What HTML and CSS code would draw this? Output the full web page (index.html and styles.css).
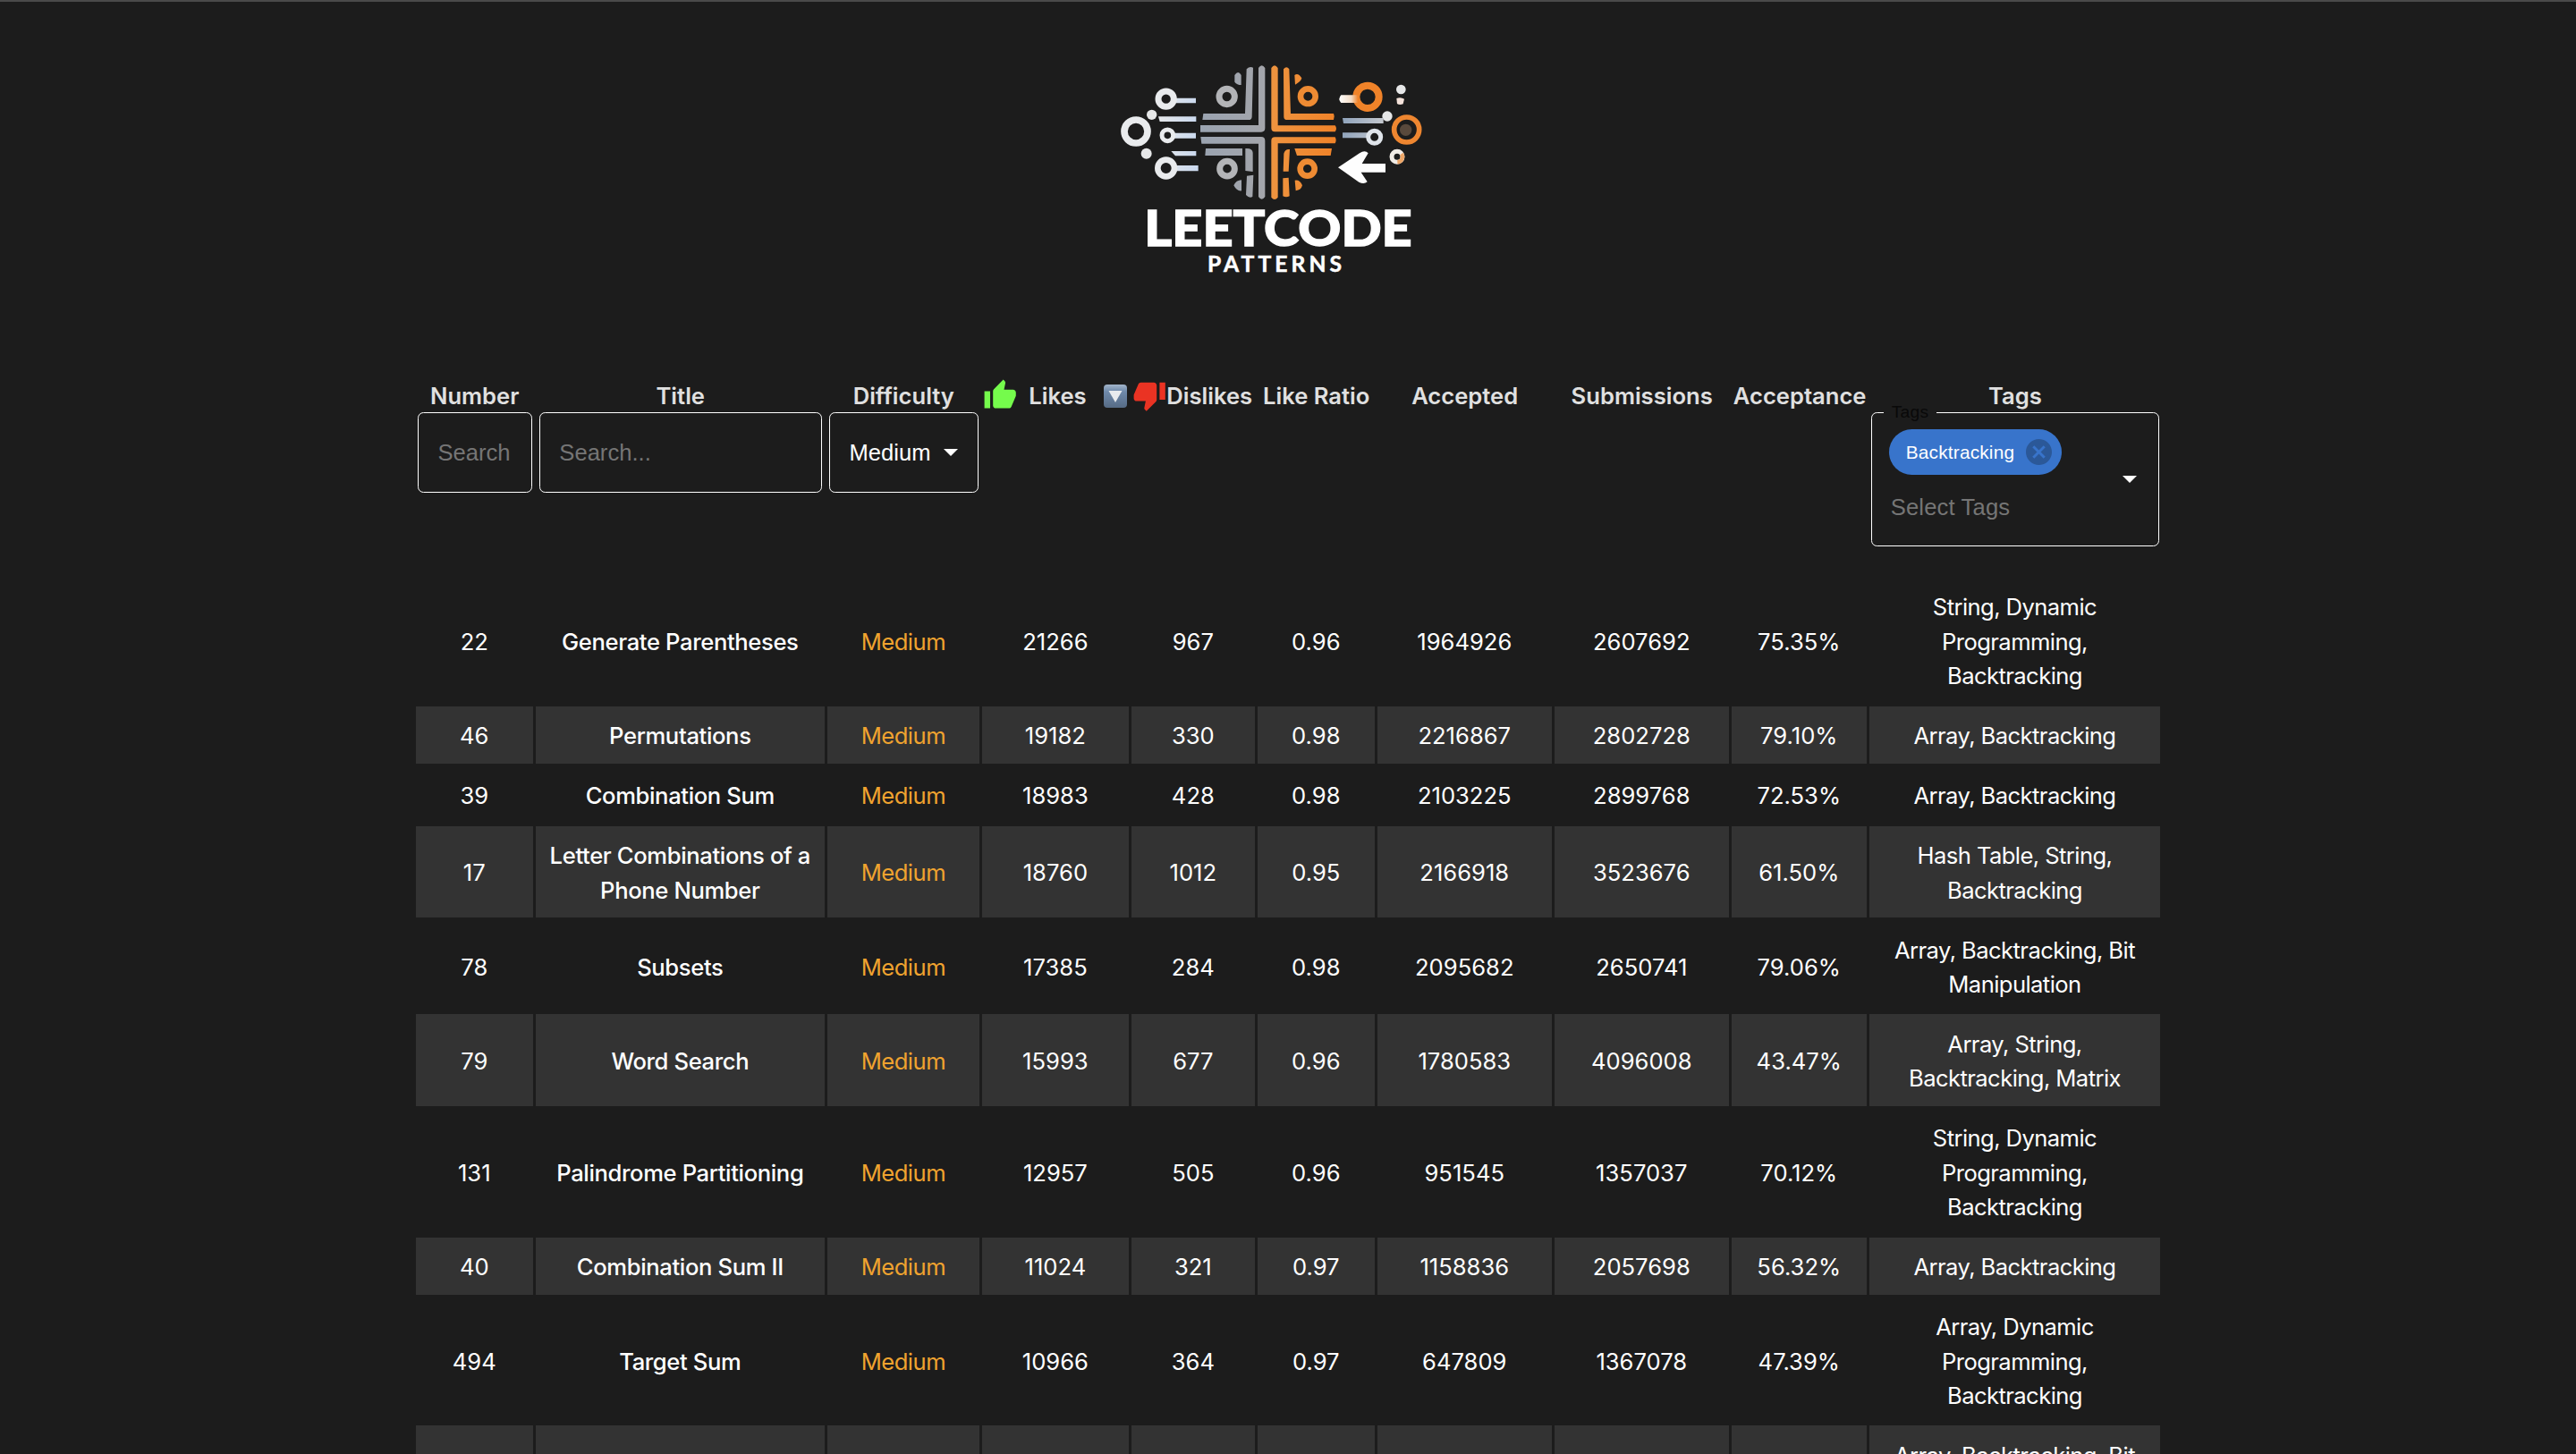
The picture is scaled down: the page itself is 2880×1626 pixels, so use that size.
FILE: index.html
```html
<!DOCTYPE html>
<html lang="en">
<head>
<meta charset="utf-8">
<title>Leetcode Patterns</title>
<link rel="stylesheet" href="styles.css">
</head>
<body>
<main class="page">
<header class="brand">
<svg class="logo" viewBox="0 0 1080 780" role="img" aria-label="Leetcode Patterns">
<defs>
<linearGradient id="steel" gradientUnits="userSpaceOnUse" x1="310" y1="0" x2="530" y2="0"><stop offset="0" stop-color="#9aa3b0"/><stop offset="1" stop-color="#a4a5aa"/></linearGradient>
<linearGradient id="amber" gradientUnits="userSpaceOnUse" x1="540" y1="0" x2="765" y2="0"><stop offset="0" stop-color="#ee9440"/><stop offset="1" stop-color="#f08228"/></linearGradient>
<linearGradient id="pale" gradientUnits="userSpaceOnUse" x1="160" y1="0" x2="300" y2="0"><stop offset="0" stop-color="#e6e8ea"/><stop offset="1" stop-color="#c9d8ee"/></linearGradient>
<linearGradient id="fade" gradientUnits="userSpaceOnUse" x1="780" y1="0" x2="925" y2="0"><stop offset="0" stop-color="#8fa3bb"/><stop offset="1" stop-color="#c5c8ce"/></linearGradient>
<linearGradient id="stub" gradientUnits="userSpaceOnUse" x1="770" y1="0" x2="835" y2="0"><stop offset="0" stop-color="#fff"/><stop offset=".65" stop-color="#f3ddc8"/><stop offset="1" stop-color="#f08228"/></linearGradient>
</defs>
<g fill="url(#steel)">
<path d="M501 48q11-16 22 0V250q0 13-13 13H306V240H501z"/>
<path d="M461 52q10-10 22-5L479 212q-1 10-11 10H313L316 201H456z"/>
<path d="M307 279H510q13 0 13 13V480q-11 16-22 0V302H310z"/>
<path d="M324 318H447V342H322zM457 318q24-2 25 14V396L457 393zM462 410L484 407 481 480q-11 6-22-6z"/>
<path d="M421 72q12-18 22 0V105q-14 0-22-10zM444 424V460q-16 2-26-18 8-18 26-18z"/>
</g>
<g fill="none" stroke="#b3b4b7" stroke-width="21"><circle cx="395" cy="144" r="26"/><circle cx="396" cy="386" r="25"/></g>
<g fill="url(#amber)">
<path d="M544 48q11-16 22 0V241H758q8 10 0 21H556q-12 0-12-12z"/>
<path d="M585 52q10-12 19 0L609 201H753q5 10 0 21H598q-12 0-12-10z"/>
<path d="M556 280H758q6 10 0 21H566V482q-11 14-22 0V292q0-12 12-12z"/>
<path d="M622 318H747L743 342H630zM606 321L602 395H584L586 335q4-16 20-14zM583 418L602 416 605 478q-11 6-22 0z"/>
<path d="M622 72q12-10 24 10-2 12-22 22zM623 425q17-3 25 17-4 16-22 18z"/>
</g>
<g fill="none" stroke="#ee8b33" stroke-width="20"><circle cx="667" cy="143" r="25"/><circle cx="665" cy="386" r="24"/></g>
<g fill="url(#pale)"><path d="M220 149H291V166H220zM165 211H292V228H170zM215 266H291V284H215zM208 327H292V343H222zM220 375H299V394H220z"/></g>
<g fill="none" stroke="#e9ebed">
<circle cx="191" cy="152" r="26" stroke-width="21"/><circle cx="90" cy="261" r="39" stroke-width="23"/>
<circle cx="196" cy="274" r="19" stroke-width="15"/><circle cx="191" cy="384" r="28" stroke-width="20"/>
</g>
<g fill="#e6e7e8"><circle cx="143" cy="205" r="17"/><circle cx="125" cy="335" r="18"/><circle cx="933" cy="210" r="17"/><circle cx="979" cy="120" r="16"/></g>
<path fill="#f4e2da" d="M964 150q14-6 26 2l-4 17q-12 4-20-1z"/>
<path fill="url(#fade)" d="M783 216H920V234H786zM783 265H870V283H783z"/>
<circle cx="867" cy="145" r="38" fill="none" stroke="#f08329" stroke-width="24"/>
<path fill="url(#stub)" d="M778 139H835V165H778q-12-13 0-26z"/>
<circle cx="890" cy="280" r="21" fill="none" stroke="#dfe4ea" stroke-width="15"/>
<circle cx="998" cy="255" r="42" fill="none" stroke="#ee8630" stroke-width="17"/><circle cx="995" cy="256" r="20" fill="#59493c"/>
<circle cx="966" cy="346" r="18" fill="none" stroke="#f1ece6" stroke-width="15"/><path d="M981 336A18 18 0 0 1 967 364" fill="none" stroke="#eda566" stroke-width="13"/>
<path fill="#fdfdfd" d="M768 382L840 334Q858 322 869 334L848 369H927V398H845L866 430Q855 440 838 431Z"/>
<g fill="#fff" class="wordmark"><text class="main" x="118" y="645" textLength="898" lengthAdjust="spacingAndGlyphs" font-size="164">LEETCODE</text>
<text class="sub" x="330" y="731" textLength="450" font-size="74">PATTERNS</text></g>
</svg>
</header>
<table class="problems">
<colgroup><col class="c-num"><col class="c-title"><col class="c-diff"><col class="c-likes"><col class="c-dis"><col class="c-ratio"><col class="c-big"><col class="c-big"><col class="c-acc"><col class="c-tags"></colgroup>
<thead><tr>
<th><div class="label">Number</div><div class="field num-field">Search</div></th>
<th><div class="label">Title</div><div class="field title-field">Search...</div></th>
<th><div class="label">Difficulty</div><div class="field select">Medium<svg class="caret" viewBox="0 0 10 5"><path d="M0 0l5 5 5-5z"/></svg></div></th>
<th><div class="label likes"><svg class="thumb up" viewBox="0 0 24 24"><path d="M1 21h4V9H1v12zm22-11c0-1.100-.9-2-2-2h-6.310l.95-4.570.03-.32c0-.41-.17-.79-.44-1.060L14.170 1 7.590 7.590C7.220 7.950 7 8.450 7 9v10c0 1.100.9 2 2 2h9c.83 0 1.540-.5 1.840-1.220l3.020-7.050c.09-.23.14-.47.14-.73v-2z"/></svg><span class="likes-text">Likes</span><svg class="sort" viewBox="0 0 26 26"><defs><linearGradient id="key" x2="0" y2="1"><stop offset="0" stop-color="#a3b5ca"/><stop offset=".3" stop-color="#6f8aab"/><stop offset="1" stop-color="#566b85"/></linearGradient></defs><rect width="26" height="26" rx="4" fill="url(#key)"/><path d="M5.500 7h15L13 20z" fill="#e8ebee"/></svg></div></th>
<th><div class="label dislikes"><svg class="thumb down" viewBox="0 0 24 24"><path d="M15 3H6c-.83 0-1.540.5-1.840 1.220l-3.020 7.050c-.09.23-.14.47-.14.73v2c0 1.100.9 2 2 2h6.310l-.95 4.570-.03.32c0 .41.17.79.44 1.060L9.830 23l6.590-6.590c.36-.36.58-.86.58-1.410V5c0-1.100-.9-2-2-2zm4 0v12h4V3h-4z"/></svg><span>Dislikes</span></div></th>
<th><div class="label">Like Ratio</div></th>
<th><div class="label">Accepted</div></th>
<th><div class="label">Submissions</div></th>
<th><div class="label">Acceptance</div></th>
<th><div class="label">Tags</div>
<div class="tag-field"><span class="legend">Tags</span><span class="chip">Backtracking<svg class="remove" viewBox="2 2 20 20"><path d="M12 2C6.470 2 2 6.470 2 12s4.470 10 10 10 10-4.470 10-10S17.530 2 12 2zm5 13.590L15.590 17 12 13.410 8.410 17 7 15.590 10.590 12 7 8.410 8.410 7 12 10.590 15.590 7 17 8.410 13.410 12 17 15.590z"/></svg></span><span class="hint">Select Tags</span><svg class="caret" viewBox="0 0 10 5"><path d="M0 0l5 5 5-5z"/></svg></div></th>
</tr></thead>
<tbody>
<tr><td>22</td><td>Generate Parentheses</td><td>Medium</td><td>21266</td><td>967</td><td>0.96</td><td>1964926</td><td>2607692</td><td>75.35%</td><td>String, Dynamic<br>Programming,<br>Backtracking</td></tr>
<tr><td>46</td><td>Permutations</td><td>Medium</td><td>19182</td><td>330</td><td>0.98</td><td>2216867</td><td>2802728</td><td>79.10%</td><td>Array, Backtracking</td></tr>
<tr><td>39</td><td>Combination Sum</td><td>Medium</td><td>18983</td><td>428</td><td>0.98</td><td>2103225</td><td>2899768</td><td>72.53%</td><td>Array, Backtracking</td></tr>
<tr><td>17</td><td>Letter Combinations of a<br>Phone Number</td><td>Medium</td><td>18760</td><td>1012</td><td>0.95</td><td>2166918</td><td>3523676</td><td>61.50%</td><td>Hash Table, String,<br>Backtracking</td></tr>
<tr><td>78</td><td>Subsets</td><td>Medium</td><td>17385</td><td>284</td><td>0.98</td><td>2095682</td><td>2650741</td><td>79.06%</td><td>Array, Backtracking, Bit<br>Manipulation</td></tr>
<tr><td>79</td><td>Word Search</td><td>Medium</td><td>15993</td><td>677</td><td>0.96</td><td>1780583</td><td>4096008</td><td>43.47%</td><td>Array, String,<br>Backtracking, Matrix</td></tr>
<tr><td>131</td><td>Palindrome Partitioning</td><td>Medium</td><td>12957</td><td>505</td><td>0.96</td><td>951545</td><td>1357037</td><td>70.12%</td><td>String, Dynamic<br>Programming,<br>Backtracking</td></tr>
<tr><td>40</td><td>Combination Sum II</td><td>Medium</td><td>11024</td><td>321</td><td>0.97</td><td>1158836</td><td>2057698</td><td>56.32%</td><td>Array, Backtracking</td></tr>
<tr><td>494</td><td>Target Sum</td><td>Medium</td><td>10966</td><td>364</td><td>0.97</td><td>647809</td><td>1367078</td><td>47.39%</td><td>Array, Dynamic<br>Programming,<br>Backtracking</td></tr>
<tr><td></td><td></td><td></td><td></td><td></td><td></td><td></td><td></td><td></td><td>Array, Backtracking, Bit<br>Manipulation</td></tr>
</tbody>
</table>
</main>
</body>
</html>
```
FILE: styles.css
```css
* { box-sizing: border-box; }
html { background: #1c1c1c; }
body {
  margin: 0;
  height: 1626px;
  overflow: hidden;
  background: #1c1c1c;
  color: #fff;
  font: 25.6px/38.4px Inter, "Liberation Sans", sans-serif;
}
.page {
  display: flex;
  flex-direction: column;
  align-items: center;
  height: 1626px;
  overflow: hidden;
  border-top: 2px solid #4a4a4a;
}
.brand {
  width: 360px;
  height: 360px;
  flex: none;
  padding-top: 58px;
  margin-right: 40px;
}
.logo { display: block; width: 360px; height: 260px; }
.wordmark { font-family: Lato, sans-serif; font-weight: 900; }
.wordmark .main { stroke: #fff; stroke-width: 4px; }
.wordmark .sub { font-weight: 700; stroke: #fff; stroke-width: 1.5px; }

.problems {
  table-layout: fixed;
  width: 1956.4px;
  border-collapse: separate;
  border-spacing: 3.2px;
  margin-top: 61px;
}
.c-num { width: 130.8px; }
.c-title { width: 322.8px; }
.c-diff { width: 169.8px; }
.c-likes { width: 163.8px; }
.c-dis { width: 137.8px; }
.c-ratio { width: 130.8px; }
.c-big { width: 194.8px; }
.c-acc { width: 150.8px; }
.c-tags { width: 325px; }

th {
  height: 216.8px;
  padding: 0 1.2px 0 2px;
  vertical-align: top;
  text-align: center;
  font-weight: 600;
  color: #e0e0e0;
  white-space: nowrap;
}
.label { height: 35px; line-height: 33px; }
.likes, .dislikes { display: flex; align-items: center; padding-bottom: 2px; }
.likes { margin-left: -1px; }
.dislikes { margin-left: -1px; }
.thumb { width: 38.4px; height: 38.4px; flex: none; }
.up { fill: #75fb4c; }
.down { fill: #ea3323; }
.likes-text { margin: 0 19px 0 13px; }
.sort { width: 26px; height: 26px; }

.field {
  display: flex;
  align-items: center;
  height: 90px;
  border: 1px solid #fff;
  border-radius: 6.4px;
  padding-left: 21.6px;
  font: 25.6px/36px "Liberation Sans", sans-serif;
  color: #757575;
}
.title-field { margin: 0 1.500px 0 2px; }
.select { color: #fff; }
.caret { width: 16px; height: 8px; fill: #fff; }
.select .caret { margin-left: 14px; }

.tag-field {
  position: relative;
  display: flex;
  flex-direction: column;
  align-items: flex-start;
  height: 150px;
  border: 1px solid #fff;
  border-radius: 6.4px;
  padding: 18px 19px;
  font: 25.6px/36px "Liberation Sans", sans-serif;
}
.legend {
  position: absolute;
  top: -15px;
  left: 13px;
  padding: 0 9px;
  background: #1c1c1c;
  color: #090909;
  font-size: 19.2px;
  line-height: 28px;
  letter-spacing: 0.25px;
}
.chip {
  display: flex;
  align-items: center;
  height: 51px;
  padding: 0 11px 0 19px;
  border-radius: 26px;
  background: #3874cb;
  color: #fff;
  font-size: 20.8px;
  line-height: 34px;
  letter-spacing: 0.2px;
}
.remove { width: 29px; height: 29px; margin-left: 13px; fill: #2b5898; }
.hint { margin-top: 18px; margin-left: 2px; color: #757575; letter-spacing: 0.15px; }
.tag-field .caret { position: absolute; right: 24px; top: 70px; }

td {
  padding: 14.6px 0 11px;
  text-align: center;
  vertical-align: middle;
  white-space: nowrap;
}
td:nth-child(2) { font-weight: 500; letter-spacing: -0.36px; }
td:nth-child(3) { color: #f0a32f; letter-spacing: -0.5px; }
td:nth-child(10) { letter-spacing: -0.58px; }
tbody tr:nth-child(even) td { background: #333; }
```
